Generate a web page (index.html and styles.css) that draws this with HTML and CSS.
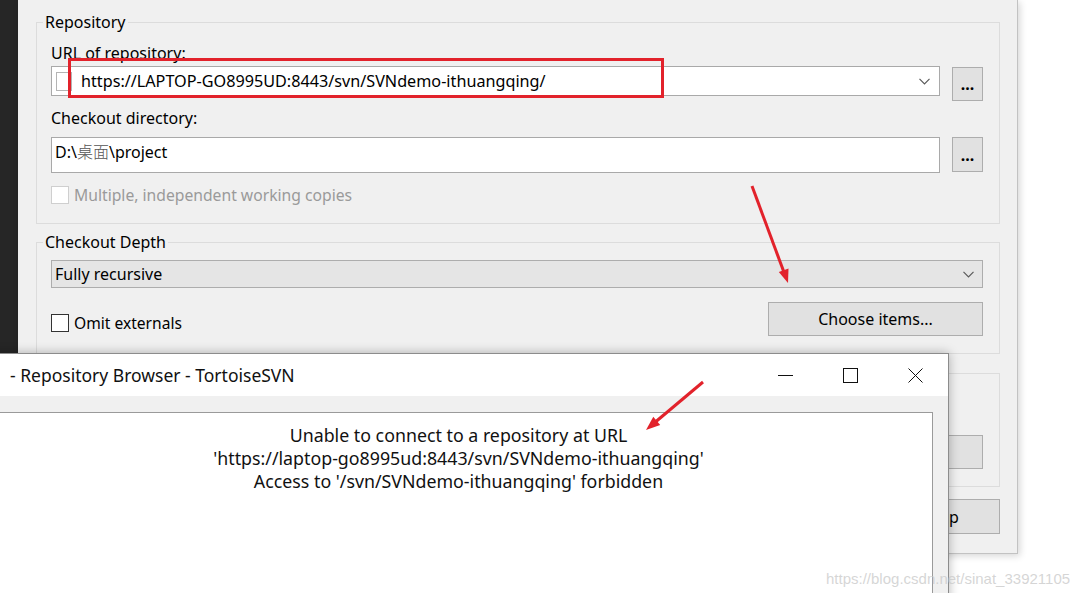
FILE: index.html
```html
<!DOCTYPE html>
<html lang="en">
<head>
    <meta charset="UTF-8">
    <meta name="viewport" content="width=device-width, initial-scale=1.0">
    <title>Checkout - TortoiseSVN</title>
    <link rel="stylesheet" href="styles.css">
</head>
<body>

    <div class="desktop">
        <div class="side-strip"></div>

        <!-- Checkout dialog (behind) -->
        <div class="checkout-window">
            <fieldset class="group group-repo">
                <legend>Repository</legend>
                <div class="field-label label-url">URL of repository:</div>
                <div class="field-row row-url">
                    <div class="combo combo-url">
                        <span class="url-icon"></span>
                        <span class="combo-text">https://LAPTOP-GO8995UD:8443/svn/SVNdemo-ithuangqing/</span>
                        <svg class="chevron" width="11" height="7" viewBox="0 0 11 7"><polyline points="0.5,0.8 5.5,5.8 10.5,0.8" fill="none" stroke="#5a5a5a" stroke-width="1.2"/></svg>
                    </div>
                    <button class="push-btn browse-btn">...</button>
                </div>
                <div class="field-label label-dir">Checkout directory:</div>
                <div class="field-row row-dir">
                    <div class="edit edit-dir">D:\<span class="cjk">桌面</span>\project</div>
                    <button class="push-btn browse-btn browse-dir">...</button>
                </div>
                <label class="check-row disabled"><span class="checkbox"></span>Multiple, independent working copies</label>
            </fieldset>

            <fieldset class="group group-depth">
                <legend>Checkout Depth</legend>
                <div class="combo combo-depth">
                    <span class="combo-text">Fully recursive</span>
                    <svg class="chevron" width="11" height="7" viewBox="0 0 11 7"><polyline points="0.5,0.8 5.5,5.8 10.5,0.8" fill="none" stroke="#5a5a5a" stroke-width="1.2"/></svg>
                </div>
                <div class="depth-row">
                    <label class="check-row"><span class="checkbox"></span>Omit externals</label>
                    <button class="push-btn choose-btn">Choose items...</button>
                </div>
            </fieldset>

            <!-- revision group, mostly hidden behind the browser window -->
            <div class="group group-revision">
                <div class="revision-row">
                    <button class="push-btn log-btn"></button>
                </div>
            </div>

            <div class="dialog-buttons">
                <button class="push-btn help-btn">Help</button>
            </div>
        </div>
    </div>

    <!-- Repository browser (front) -->
    <div class="repo-browser">
        <div class="title-bar">
            <span class="title-text">- Repository Browser - TortoiseSVN</span>
            <div class="title-controls">
                <span class="title-btn"><svg width="15" height="15" viewBox="0 0 15 15"><line x1="0" y1="7.5" x2="15" y2="7.5" stroke="#111" stroke-width="1"/></svg></span>
                <span class="title-btn"><svg width="15" height="15" viewBox="0 0 15 15"><rect x="0.5" y="0.5" width="14" height="14" fill="none" stroke="#111" stroke-width="1"/></svg></span>
                <span class="title-btn"><svg width="15" height="15" viewBox="0 0 15 15"><path d="M0.5 0.5 L14.5 14.5 M14.5 0.5 L0.5 14.5" stroke="#111" stroke-width="1"/></svg></span>
            </div>
        </div>
        <div class="browser-body">
            <div class="message-box">
                <div>Unable to connect to a repository at URL</div>
                <div>'https://laptop-go8995ud:8443/svn/SVNdemo-ithuangqing'</div>
                <div>Access to '/svn/SVNdemo-ithuangqing' forbidden</div>
            </div>
        </div>
    </div>

    <!-- red annotations drawn over the screenshot -->
    <svg class="annotations" width="1080" height="593" viewBox="0 0 1080 593">
        <rect x="69.5" y="59.5" width="593" height="37" fill="none" stroke="#e2222b" stroke-width="3"/>
        <line x1="752" y1="186" x2="783.5" y2="271" stroke="#e2222b" stroke-width="3"/>
        <polygon points="788,283 788.5,268.5 778.8,272" fill="#e2222b"/>
        <line x1="703" y1="382" x2="656" y2="421.5" stroke="#e2222b" stroke-width="3"/>
        <polygon points="646,430 653.3,416.8 660.2,425" fill="#e2222b"/>
    </svg>

    <div class="watermark">https://blog.csdn.net/sinat_33921105</div>

</body>
</html>
```

FILE: styles.css
```css
* {
    box-sizing: border-box;
}
body {
    margin: 0;
    width: 1080px;
    height: 593px;
    overflow: hidden;
    position: relative;
    background-color: #fff;
    font-family: "Noto Sans", "Open Sans", sans-serif;
    font-size: 16px;
    line-height: 20px;
    color: #000;
}
button {
    font: inherit;
    color: inherit;
}
.desktop {
    display: flex;
    align-items: flex-start;
}
.side-strip {
    width: 18px;
    height: 593px;
    background-color: #262626;
}

/* checkout dialog */
.checkout-window {
    width: 1000px;
    height: 554px;
    padding: 12px 17px 0 18px;
    background-color: #f0f0f0;
    border-right: 1px solid #c2c2c2;
    border-bottom: 1px solid #c2c2c2;
    box-shadow: 2px 2px 7px rgba(0, 0, 0, 0.16);
}
.group {
    margin: 0;
    padding: 0 16px 18px 14px;
    border: 1px solid #dcdcdc;
    min-width: 0;
}
.group legend {
    margin-left: -8px;
    padding: 0 2px;
    line-height: 20px;
}
.group-depth {
    margin-top: 8px;
    padding-bottom: 17px;
}
.group-revision {
    margin-top: 19px;
    padding-bottom: 17px;
}
.label-url {
    margin-top: 11px;
}
.label-dir {
    margin-top: 7px;
}
.field-row {
    display: flex;
    align-items: flex-start;
    gap: 12px;
}
.row-url {
    margin-top: 3px;
}
.row-dir {
    margin-top: 9px;
}
.combo {
    display: flex;
    align-items: center;
    background-color: #fff;
    border: 1px solid #a9a9a9;
}
.combo-text {
    flex: 1;
    white-space: nowrap;
}
.combo-url {
    flex: 1;
    height: 30px;
    padding: 0 9px 0 4px;
}
.combo-url .combo-text {
    font-size: 16.2px;
}
.url-icon {
    width: 16px;
    height: 19px;
    margin-right: 9px;
    border: 1px solid #b4b4b4;
    background-color: #fff;
}
.edit {
    background-color: #fff;
    border: 1px solid #a9a9a9;
}
.edit-dir {
    flex: 1;
    height: 36px;
    padding: 3px 3px;
}
.cjk {
    font-family: "Noto Sans CJK SC", sans-serif;
    font-weight: 300;
    color: #555;
}
.push-btn {
    margin: 0;
    padding: 0;
    background-color: #e1e1e1;
    border: 1px solid #adadad;
    text-align: center;
    line-height: 20px;
}
.browse-btn {
    width: 31px;
    height: 34px;
    margin-top: 1px;
    font-weight: bold;
}
.browse-dir {
    height: 35px;
    margin-top: 0;
}
.check-row {
    display: flex;
    align-items: center;
    gap: 5px;
    height: 20px;
    margin-top: 12px;
}
.checkbox {
    width: 18px;
    height: 18px;
    background-color: #fff;
    border: 1px solid #333;
}
.check-row.disabled {
    color: #9a9a9a;
    font-size: 15.7px;
}
.check-row.disabled .checkbox {
    border-color: #cfcfcf;
}
.combo-depth {
    height: 28px;
    margin-top: 8px;
    padding: 0 8px 0 3px;
    background-color: #e5e5e5;
    border-color: #adadad;
}
.depth-row {
    display: flex;
    align-items: flex-start;
    justify-content: space-between;
    margin-top: 14px;
}
.depth-row .check-row {
    margin-top: 11px;
    font-size: 15.6px;
}
.choose-btn {
    width: 215px;
    height: 34px;
}
.revision-row {
    display: flex;
    justify-content: flex-end;
    margin-top: 61px;
}
.log-btn {
    width: 215px;
    height: 34px;
}
.dialog-buttons {
    display: flex;
    justify-content: flex-end;
    margin-top: 12px;
}
.dialog-buttons .push-btn {
    width: 117px;
    height: 35px;
}

/* repository browser window */
.repo-browser {
    position: absolute;
    top: 353px;
    left: -32px;
    width: 981px;
    height: 260px;
    background-color: #f0f0f0;
    border: 1px solid #8c8c8c;
    box-shadow: 0 0 10px rgba(0, 0, 0, 0.28);
}
.title-bar {
    display: flex;
    align-items: center;
    height: 42px;
    padding-left: 41px;
    background-color: #fff;
}
.title-text {
    flex: 1;
    font-size: 17.5px;
    color: #111;
}
.title-controls {
    display: flex;
    height: 42px;
}
.title-btn {
    display: flex;
    align-items: center;
    justify-content: center;
    width: 65px;
}
.browser-body {
    padding: 16px 15px 0;
}
.message-box {
    height: 200px;
    padding-top: 11px;
    background-color: #fff;
    border: 1px solid #9a9a9a;
    text-align: center;
    font-size: 17.8px;
    line-height: 23px;
    color: #111;
}

.annotations {
    position: absolute;
    top: 0;
    left: 0;
    pointer-events: none;
}
.watermark {
    position: absolute;
    left: 826px;
    top: 569px;
    font-family: "Liberation Sans", Arial, sans-serif;
    font-size: 15px;
    color: rgba(200, 200, 200, 0.75);
    white-space: nowrap;
}
```
